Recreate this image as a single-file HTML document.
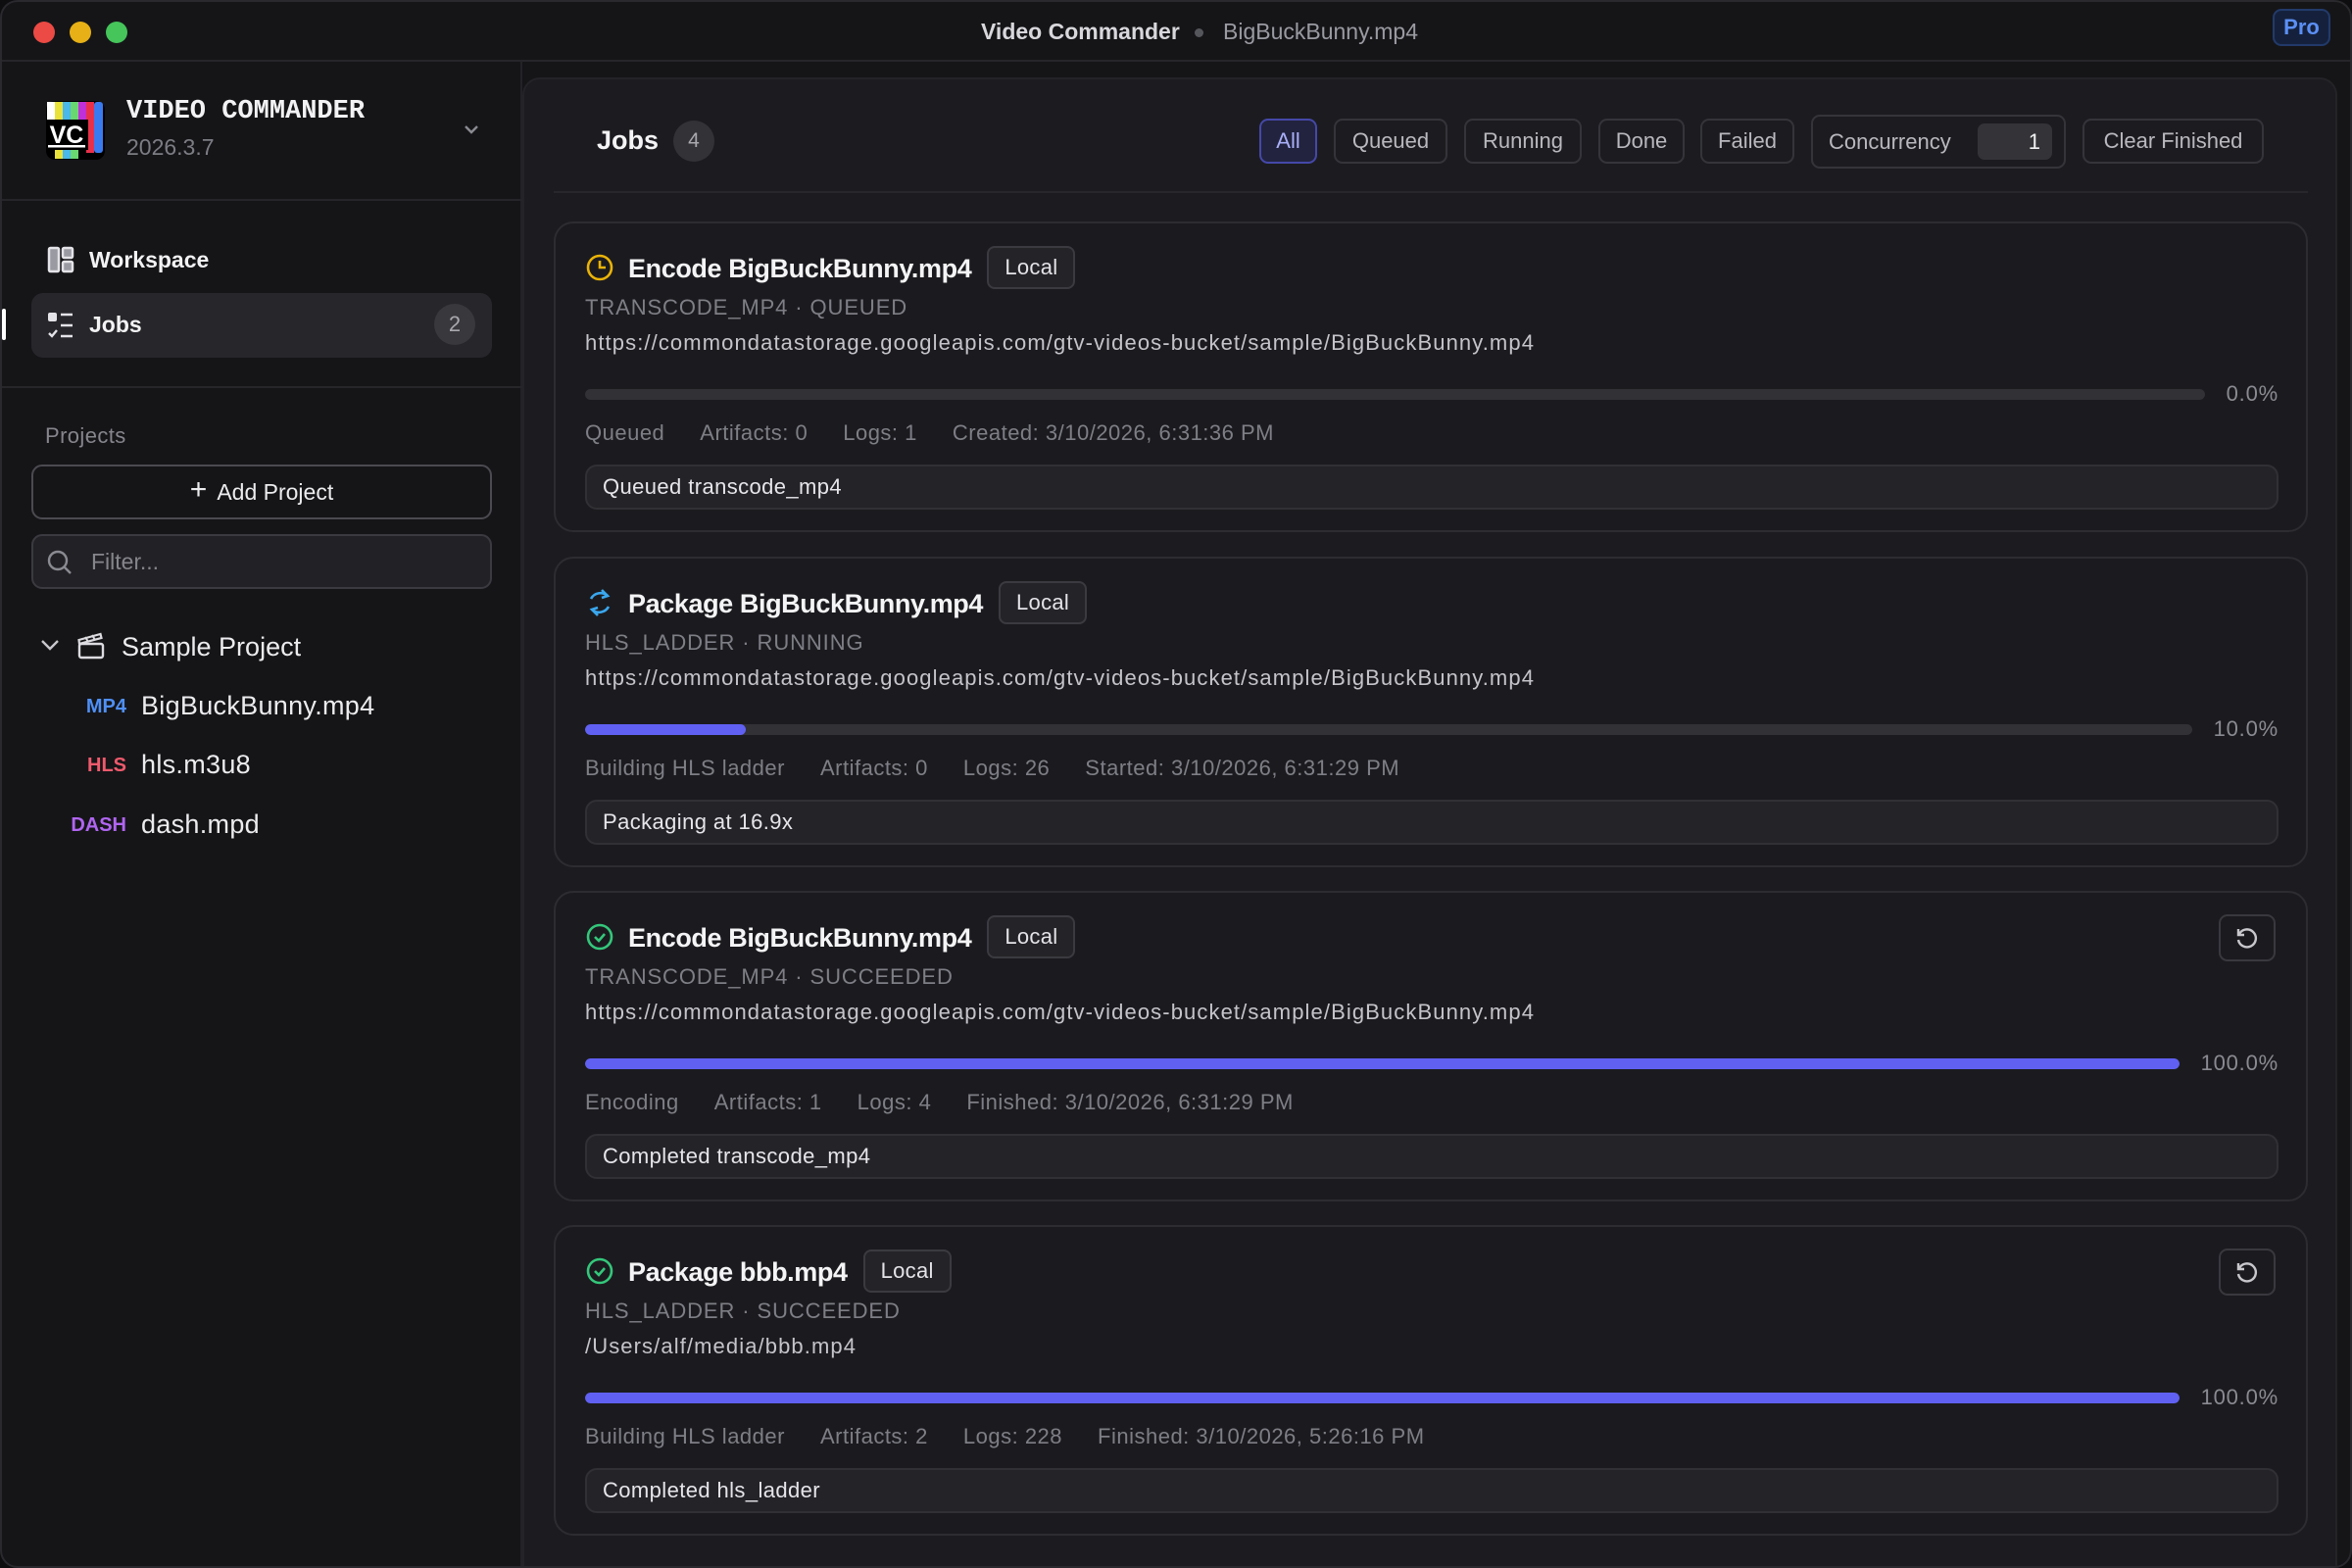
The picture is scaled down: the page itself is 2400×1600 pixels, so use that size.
<!DOCTYPE html>
<html><head><meta charset="utf-8"><style>
*{box-sizing:border-box;margin:0;padding:0}
html,body{width:2400px;height:1600px;background:#0e0e10;overflow:hidden;font-family:"Liberation Sans",sans-serif;color:#ececef}
.win{position:absolute;left:0;top:0;width:2400px;height:1600px;background:#151518;border-radius:18px;border:2px solid #2a2a2e;overflow:hidden}
.abs{position:absolute}
.tb{position:absolute;left:0;top:0;width:2400px;height:61px;border-bottom:2px solid #26262a}
.dot{position:absolute;top:20px;width:22px;height:22px;border-radius:50%}
.side{position:absolute;left:0;top:61px;width:531px;height:1540px;border-right:2px solid #232327}
.panel{position:absolute;left:531px;top:77px;width:1852px;height:1560px;background:#1c1c20;border-radius:18px;border:2px solid #242428}
.btn{position:absolute;top:119px;height:46px;border:2px solid #34343a;border-radius:9px;color:#b8b8be;font-size:22px;display:flex;align-items:center;justify-content:center}
.card{position:absolute;left:563px;width:1790px;height:317px;border:2px solid #2c2c31;border-radius:20px;background:#1b1b1f}
.card .ic{position:absolute;left:30px;top:30px;width:30px;height:30px}
.card .t{position:absolute;left:74px;top:26px;font-size:27px;font-weight:bold;color:#f4f4f6;white-space:nowrap;line-height:36px;letter-spacing:-0.4px}
.badge{display:inline-block;vertical-align:middle;margin-left:16px;height:44px;padding:0 16px;border:2px solid #3a3a40;border-radius:8px;background:#242428;font-size:22px;line-height:40px;font-weight:normal;color:#e4e4e8;position:relative;top:-3px;letter-spacing:0.3px}
.card .s{position:absolute;left:30px;top:73px;font-size:22px;color:#7e7e86;letter-spacing:0.9px}
.card .u{position:absolute;left:30px;top:109px;font-size:22px;color:#c4c4ca;white-space:nowrap;letter-spacing:1.1px}
.card .pr{position:absolute;left:30px;top:161px;width:1728px;display:flex;align-items:center;gap:22px}
.track{flex:1;height:11px;background:#313136;border-radius:6px;overflow:hidden}
.fill{height:100%;background:#6060f2;border-radius:6px}
.pct{font-size:22px;color:#8a8a92;letter-spacing:0.8px}
.card .m{position:absolute;left:30px;top:201px;font-size:22px;color:#7e7e86;white-space:nowrap;letter-spacing:0.5px}
.card .m span{margin-right:36px}
.card .msg{position:absolute;left:30px;top:246px;width:1728px;height:46px;background:#242428;border:2px solid #303035;border-radius:12px;font-size:22px;color:#e6e6ea;padding-left:16px;line-height:42px;letter-spacing:0.4px}
.retry{position:absolute;right:31px;top:22px;width:58px;height:48px;border:2px solid #38383e;border-radius:9px;display:flex;align-items:center;justify-content:center}
.file{position:absolute;font-size:27px;color:#ececef;letter-spacing:0.3px}
.lab{position:absolute;font-size:20px;font-weight:bold;text-align:right;width:90px;left:37px}
</style></head><body>
<div class="win">
 <div class="tb">
  <div class="dot" style="left:32px;background:#ec4a44"></div>
  <div class="dot" style="left:69px;background:#e6b016"></div>
  <div class="dot" style="left:106px;background:#45c55a"></div>
  <div class="abs" style="left:999px;top:17px;font-size:23px;font-weight:bold;color:#d8d8dc">Video Commander</div>
  <div class="abs" style="left:1217px;top:27px;width:9px;height:9px;border-radius:50%;background:#55555c"></div>
  <div class="abs" style="left:1246px;top:17px;font-size:23px;color:#9a9aa2">BigBuckBunny.mp4</div>
  <div class="abs" style="left:2317px;top:7px;width:59px;height:38px;border:2px solid #223a6a;background:#15213c;border-radius:9px;color:#5b8ff5;font-size:22px;font-weight:bold;text-align:center;line-height:34px">Pro</div>
 </div>

 <div class="side">
  <svg class="abs" style="left:44px;top:39px" width="62" height="62" viewBox="0 0 62 62">
   <rect x="1" y="1" width="60" height="60" rx="9" fill="#000"/>
   <rect x="2" y="2" width="8" height="18" fill="#fff"/><rect x="10" y="2" width="8" height="18" fill="#e8e23a"/><rect x="18" y="2" width="8" height="18" fill="#4ab8e8"/><rect x="26" y="2" width="8" height="18" fill="#6ad870"/><rect x="34" y="2" width="8" height="18" fill="#c030d8"/><rect x="42" y="2" width="8" height="52" fill="#e8304a"/><rect x="50" y="2" width="9" height="52" rx="3" fill="#3a7af0"/>
   <rect x="10" y="51" width="8" height="9" fill="#e8e23a"/><rect x="18" y="51" width="8" height="9" fill="#4ab8e8"/><rect x="26" y="51" width="8" height="9" fill="#6ad870"/>
   <rect x="2" y="20" width="42" height="31" fill="#000"/>
   <text x="22" y="44" font-family="Liberation Sans" font-weight="bold" font-size="25" fill="#fff" text-anchor="middle">VC</text>
   <rect x="3" y="46" width="38" height="2.5" fill="#fff"/>
  </svg>
  <div class="abs" style="left:127px;top:36px;font-family:'Liberation Mono',monospace;font-size:27px;font-weight:bold;color:#f2f2f4">VIDEO COMMANDER</div>
  <div class="abs" style="left:127px;top:74px;font-size:23px;color:#7c7c84">2026.3.7</div>
  <svg class="abs" style="left:469px;top:62px" width="20" height="14" viewBox="0 0 20 14"><path d="M4 4l6 6 6-6" stroke="#8a8a92" stroke-width="2.4" fill="none"/></svg>
  <div class="abs" style="left:0;top:140px;width:531px;height:2px;background:#26262a"></div>

  <svg class="abs" style="left:46px;top:188px" width="28" height="28" viewBox="0 0 28 28"><rect x="2" y="2" width="10" height="24" rx="1.5" fill="#9a9aa2" stroke="#e4e4e8" stroke-width="2.5"/><rect x="16" y="2" width="10" height="10" rx="1.5" fill="#9a9aa2" stroke="#e4e4e8" stroke-width="2.5"/><rect x="16" y="16" width="10" height="10" rx="1.5" fill="#9a9aa2" stroke="#e4e4e8" stroke-width="2.5"/></svg>
  <div class="abs" style="left:89px;top:189px;font-size:23px;font-weight:bold;color:#f2f2f4">Workspace</div>
  <div class="abs" style="left:0;top:252px;width:4px;height:32px;background:#fff;border-radius:2px"></div>
  <div class="abs" style="left:30px;top:236px;width:470px;height:66px;background:#27272b;border-radius:12px"></div>
  <svg class="abs" style="left:46px;top:255px" width="28" height="28" viewBox="0 0 28 28"><rect x="1" y="1" width="9" height="9" rx="2" fill="#e4e4e8"/><path d="M2 22l3 3 5-6" stroke="#e4e4e8" stroke-width="2.4" fill="none"/><path d="M14 3h12M14 14h12M14 25h12" stroke="#e4e4e8" stroke-width="2.4"/></svg>
  <div class="abs" style="left:89px;top:255px;font-size:23px;font-weight:bold;color:#f2f2f4">Jobs</div>
  <div class="abs" style="left:441px;top:247px;width:42px;height:42px;border-radius:50%;background:#38383d;color:#a8a8ae;font-size:22px;text-align:center;line-height:42px">2</div>
  <div class="abs" style="left:0;top:331px;width:531px;height:2px;background:#26262a"></div>

  <div class="abs" style="left:44px;top:369px;font-size:22px;color:#85858c;letter-spacing:0.4px">Projects</div>
  <div class="abs" style="left:30px;top:411px;width:470px;height:56px;border:2px solid #4a4a50;border-radius:11px;display:flex;align-items:center;justify-content:center;font-size:23px;color:#ececef"><span style="font-size:30px;margin-right:10px;font-weight:300;position:relative;top:-2px">+</span>Add Project</div>
  <div class="abs" style="left:30px;top:482px;width:470px;height:56px;border:2px solid #3a3a40;background:#222226;border-radius:11px"></div>
  <svg class="abs" style="left:45px;top:497px" width="28" height="28" viewBox="0 0 28 28"><circle cx="12" cy="12" r="9" stroke="#8a8a92" stroke-width="2.4" fill="none"/><path d="M19 19l6 6" stroke="#8a8a92" stroke-width="2.4"/></svg>
  <div class="abs" style="left:91px;top:497px;font-size:23px;color:#85858c">Filter...</div>

  <svg class="abs" style="left:38px;top:587px" width="22" height="16" viewBox="0 0 22 16"><path d="M3 4l8 8 8-8" stroke="#c8c8cc" stroke-width="2.4" fill="none"/></svg>
  <svg class="abs" style="left:77px;top:582px" width="28" height="28" viewBox="0 0 28 28"><rect x="2" y="12" width="24" height="14" rx="2" stroke="#dcdce0" stroke-width="2.4" fill="none"/><path d="M2 12l-0.5-4 22-6 1 4z" stroke="#dcdce0" stroke-width="2.2" fill="none"/><path d="M8 5l3 5M15 3l3 5" stroke="#dcdce0" stroke-width="2"/></svg>
  <div class="abs" style="left:122px;top:582px;font-size:27px;color:#ececef">Sample Project</div>
  <div class="lab" style="top:647px;color:#4f8ff5">MP4</div><div class="file" style="left:142px;top:642px">BigBuckBunny.mp4</div>
  <div class="lab" style="top:707px;color:#ef5a6c">HLS</div><div class="file" style="left:142px;top:702px">hls.m3u8</div>
  <div class="lab" style="top:768px;color:#b065f0">DASH</div><div class="file" style="left:142px;top:763px">dash.mpd</div>
 </div>

 <div class="panel"></div>
 <div class="abs" style="left:607px;top:126px;font-size:27px;font-weight:bold;color:#f4f4f6">Jobs</div>
 <div class="abs" style="left:685px;top:121px;width:42px;height:42px;border-radius:50%;background:#323237;color:#a8a8ae;font-size:21px;text-align:center;line-height:42px">4</div>
 <div class="btn" style="left:1283px;width:59px;border-color:#4548a8;background:#22233e;color:#a9aff8">All</div>
 <div class="btn" style="left:1359px;width:116px">Queued</div>
 <div class="btn" style="left:1492px;width:120px">Running</div>
 <div class="btn" style="left:1629px;width:88px">Done</div>
 <div class="btn" style="left:1733px;width:96px">Failed</div>
 <div class="btn" style="left:1846px;top:115px;width:260px;height:55px;justify-content:flex-start;padding-left:16px">Concurrency<div class="abs" style="left:168px;top:7px;width:76px;height:37px;background:#343438;border-radius:7px;color:#f0f0f2;text-align:right;padding-right:12px;line-height:37px">1</div></div>
 <div class="btn" style="left:2123px;width:185px">Clear Finished</div>
 <div class="abs" style="left:563px;top:193px;width:1790px;height:2px;background:#28282c"></div>

 <div class="card" style="top:224px">
  <svg class="ic" viewBox="0 0 30 30"><circle cx="15" cy="15" r="12" stroke="#eab308" stroke-width="2.6" fill="none"/><path d="M15 8v7h6" stroke="#eab308" stroke-width="2.6" fill="none"/></svg>
  <div class="t">Encode BigBuckBunny.mp4<span class="badge">Local</span></div>
  <div class="s">TRANSCODE_MP4 · QUEUED</div>
  <div class="u">https://commondatastorage.googleapis.com/gtv-videos-bucket/sample/BigBuckBunny.mp4</div>
  <div class="pr"><div class="track"><div class="fill" style="width:0"></div></div><div class="pct">0.0%</div></div>
  <div class="m"><span>Queued</span><span>Artifacts: 0</span><span>Logs: 1</span><span>Created: 3/10/2026, 6:31:36 PM</span></div>
  <div class="msg">Queued transcode_mp4</div>
 </div>
 <div class="card" style="top:566px">
  <svg class="ic" viewBox="0 0 30 30"><path d="M23 8a11 11 0 0 0-17 3M7 22a11 11 0 0 0 17-3" stroke="#3aa7ee" stroke-width="2.6" fill="none"/><path d="M17 2l6 6-6 2M13 28l-6-6 6-2" stroke="#3aa7ee" stroke-width="2.6" fill="none"/></svg>
  <div class="t">Package BigBuckBunny.mp4<span class="badge">Local</span></div>
  <div class="s">HLS_LADDER · RUNNING</div>
  <div class="u">https://commondatastorage.googleapis.com/gtv-videos-bucket/sample/BigBuckBunny.mp4</div>
  <div class="pr"><div class="track"><div class="fill" style="width:10%"></div></div><div class="pct">10.0%</div></div>
  <div class="m"><span>Building HLS ladder</span><span>Artifacts: 0</span><span>Logs: 26</span><span>Started: 3/10/2026, 6:31:29 PM</span></div>
  <div class="msg">Packaging at 16.9x</div>
 </div>
 <div class="card" style="top:907px">
  <svg class="ic" viewBox="0 0 30 30"><circle cx="15" cy="15" r="12" stroke="#34c77b" stroke-width="2.6" fill="none"/><path d="M10 15l4 4 6-7" stroke="#34c77b" stroke-width="2.6" fill="none"/></svg>
  <div class="t">Encode BigBuckBunny.mp4<span class="badge">Local</span></div>
  <div class="retry"><svg width="26" height="26" viewBox="0 0 26 26"><path d="M5 9a9 9 0 1 1-1 6" stroke="#c8c8cc" stroke-width="2.4" fill="none"/><path d="M4 4v6h6" stroke="#c8c8cc" stroke-width="2.4" fill="none"/></svg></div>
  <div class="s">TRANSCODE_MP4 · SUCCEEDED</div>
  <div class="u">https://commondatastorage.googleapis.com/gtv-videos-bucket/sample/BigBuckBunny.mp4</div>
  <div class="pr"><div class="track"><div class="fill" style="width:100%"></div></div><div class="pct">100.0%</div></div>
  <div class="m"><span>Encoding</span><span>Artifacts: 1</span><span>Logs: 4</span><span>Finished: 3/10/2026, 6:31:29 PM</span></div>
  <div class="msg">Completed transcode_mp4</div>
 </div>
 <div class="card" style="top:1248px">
  <svg class="ic" viewBox="0 0 30 30"><circle cx="15" cy="15" r="12" stroke="#34c77b" stroke-width="2.6" fill="none"/><path d="M10 15l4 4 6-7" stroke="#34c77b" stroke-width="2.6" fill="none"/></svg>
  <div class="t">Package bbb.mp4<span class="badge">Local</span></div>
  <div class="retry"><svg width="26" height="26" viewBox="0 0 26 26"><path d="M5 9a9 9 0 1 1-1 6" stroke="#c8c8cc" stroke-width="2.4" fill="none"/><path d="M4 4v6h6" stroke="#c8c8cc" stroke-width="2.4" fill="none"/></svg></div>
  <div class="s">HLS_LADDER · SUCCEEDED</div>
  <div class="u">/Users/alf/media/bbb.mp4</div>
  <div class="pr"><div class="track"><div class="fill" style="width:100%"></div></div><div class="pct">100.0%</div></div>
  <div class="m"><span>Building HLS ladder</span><span>Artifacts: 2</span><span>Logs: 228</span><span>Finished: 3/10/2026, 5:26:16 PM</span></div>
  <div class="msg">Completed hls_ladder</div>
 </div>
</div>
</body></html>
